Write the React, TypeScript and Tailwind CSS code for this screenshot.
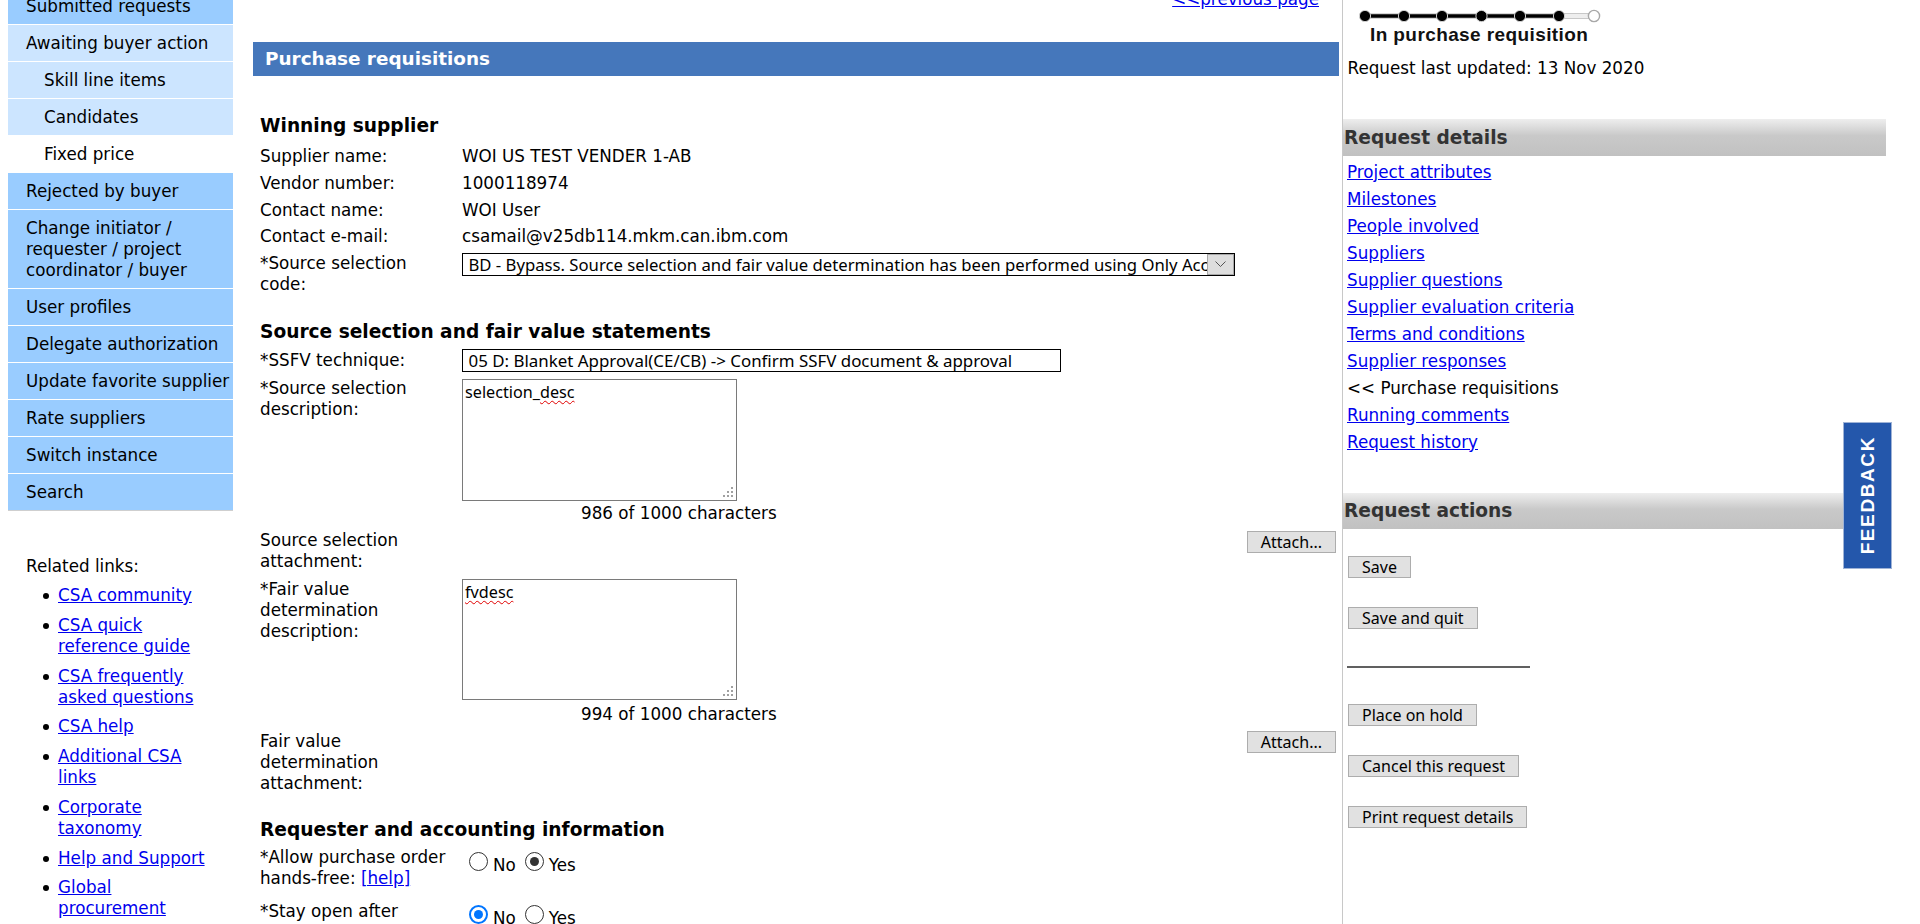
import React from "react";

type Tone = "dark" | "light" | "white";

const toneClass: Record<Tone, string> = {
  dark: "bg-[#99ccff]",
  light: "bg-[#cce5ff]",
  white: "bg-white",
};

const navItems: { lines: string[]; tone: Tone; indent?: boolean; last?: boolean }[] = [
  { lines: ["Submitted requests"], tone: "dark" },
  { lines: ["Awaiting buyer action"], tone: "light" },
  { lines: ["Skill line items"], tone: "light", indent: true },
  { lines: ["Candidates"], tone: "light", indent: true },
  { lines: ["Fixed price"], tone: "white", indent: true },
  { lines: ["Rejected by buyer"], tone: "dark" },
  { lines: ["Change initiator /", "requester / project", "coordinator / buyer"], tone: "dark" },
  { lines: ["User profiles"], tone: "dark" },
  { lines: ["Delegate authorization"], tone: "dark" },
  { lines: ["Update favorite supplier"], tone: "dark" },
  { lines: ["Rate suppliers"], tone: "dark" },
  { lines: ["Switch instance"], tone: "dark" },
  { lines: ["Search"], tone: "dark", last: true },
];

const related: string[][] = [
  ["CSA community"],
  ["CSA quick", "reference guide"],
  ["CSA frequently", "asked questions"],
  ["CSA help"],
  ["Additional CSA", "links"],
  ["Corporate", "taxonomy"],
  ["Help and Support"],
  ["Global", "procurement"],
];

const detailLinks: { text: string; link: boolean }[] = [
  { text: "Project attributes", link: true },
  { text: "Milestones", link: true },
  { text: "People involved", link: true },
  { text: "Suppliers", link: true },
  { text: "Supplier questions", link: true },
  { text: "Supplier evaluation criteria", link: true },
  { text: "Terms and conditions", link: true },
  { text: "Supplier responses", link: true },
  { text: "<< Purchase requisitions", link: false },
  { text: "Running comments", link: true },
  { text: "Request history", link: true },
];

function Lines({ lines }: { lines: string[] }) {
  return (
    <>
      {lines.map((l, i) => (
        <React.Fragment key={i}>
          {i > 0 && <br />}
          {l}
        </React.Fragment>
      ))}
    </>
  );
}

function Grip() {
  return (
    <svg className="absolute right-[3px] bottom-[3px]" width="10" height="10" viewBox="0 0 10 10">
      <rect x="8" y="0" width="2" height="2" fill="#a0a0a0" />
      <rect x="4" y="4" width="2" height="2" fill="#a0a0a0" />
      <rect x="8" y="4" width="2" height="2" fill="#a0a0a0" />
      <rect x="0" y="8" width="2" height="2" fill="#a0a0a0" />
      <rect x="4" y="8" width="2" height="2" fill="#a0a0a0" />
      <rect x="8" y="8" width="2" height="2" fill="#a0a0a0" />
    </svg>
  );
}

function Btn({ children }: { children: React.ReactNode }) {
  return (
    <div className="inline-flex h-[22px] items-center border border-[#adadad] bg-[#e1e1e1] px-[13px] font-['Noto_Sans',sans-serif] text-[16px] leading-[20px] text-black whitespace-nowrap">
      {children}
    </div>
  );
}

function Radio({ checked, blue }: { checked?: boolean; blue?: boolean }) {
  if (checked && blue) {
    return (
      <span className="flex h-[19px] w-[19px] shrink-0 items-center justify-center rounded-full border-2 border-[#0075ff] bg-white">
        <span className="block h-[9px] w-[9px] rounded-full bg-[#0075ff]" />
      </span>
    );
  }
  if (checked) {
    return (
      <span className="flex h-[19px] w-[19px] shrink-0 items-center justify-center rounded-full border border-[#333333] bg-white">
        <span className="block h-[9px] w-[9px] rounded-full bg-[#333333]" />
      </span>
    );
  }
  return <span className="block h-[19px] w-[19px] shrink-0 rounded-full border border-[#333333] bg-white" />;
}

function RadioGroup({ yes, blue }: { yes: boolean; blue?: boolean }) {
  return (
    <div className="ml-[7px] flex items-start">
      <Radio checked={!yes} blue={blue} />
      <span className="ml-[5px] pt-[3px]">No</span>
      <span className="ml-[9px] block">
        <Radio checked={yes} blue={blue} />
      </span>
      <span className="ml-[5px] pt-[3px]">Yes</span>
    </div>
  );
}

export default function App() {
  return (
    <div className="relative h-[924px] w-[1920px] overflow-hidden bg-white font-['DejaVu_Sans',sans-serif] text-[16.75px] leading-[21px] text-black">
      <div className="-mt-[12px] flex items-start">
        {/* Left navigation */}
        <aside className="ml-[8px] w-[225px] shrink-0">
          <nav>
            {navItems.map((it, i) => (
              <div
                key={i}
                className={`${toneClass[it.tone]} ${it.last ? "border-b border-[#cfcfcf]" : "border-b border-white"} ${
                  it.indent ? "pl-[36px]" : "pl-[18px]"
                } pt-[8px] pb-[7px] whitespace-nowrap`}
              >
                <Lines lines={it.lines} />
              </div>
            ))}
          </nav>
          <div className="mt-[45px] pl-[18px]">Related links:</div>
          <ul className="mt-[8px]">
            {related.map((r, i) => (
              <li key={i} className="mb-[8.75px] flex items-start">
                <span className="ml-[35px] mt-[8px] h-[6px] w-[6px] shrink-0 rounded-full bg-black" />
                <a className="ml-[9px] whitespace-nowrap text-[#0000ee] underline">
                  <Lines lines={r} />
                </a>
              </li>
            ))}
          </ul>
        </aside>

        {/* Main content */}
        <main className="ml-[20px] w-[1086px] shrink-0">
          <div className="mt-[1px] pr-[20px] text-right">
            <a className="text-[#0000ee] underline">&lt;&lt;previous page</a>
          </div>
          <div className="mt-[32px] h-[34px] bg-[#4577bb] pl-[12px] text-[18.4px] font-bold leading-[34px] text-white">
            Purchase requisitions
          </div>

          <div className="flex flex-col pl-[7px]">
            <h2 className="mt-[38px] text-[18.6px] font-bold leading-[24px]">Winning supplier</h2>
            <div className="mt-[8.2px] flex flex-col gap-[5.75px]">
              <div className="flex">
                <div className="w-[202px] shrink-0">Supplier name:</div>
                <div>WOI US TEST VENDER 1-AB</div>
              </div>
              <div className="flex">
                <div className="w-[202px] shrink-0">Vendor number:</div>
                <div>1000118974</div>
              </div>
              <div className="flex">
                <div className="w-[202px] shrink-0">Contact name:</div>
                <div>WOI User</div>
              </div>
              <div className="flex">
                <div className="w-[202px] shrink-0">Contact e-mail:</div>
                <div>csamail@v25db114.mkm.can.ibm.com</div>
              </div>
              <div className="flex items-start">
                <div className="w-[202px] shrink-0">
                  *Source selection
                  <br />
                  code:
                </div>
                <div className="flex h-[23px] w-[773px] items-stretch border border-black bg-white font-['Noto_Sans',sans-serif] text-[16.7px] leading-[21px]">
                  <div className="flex-1 overflow-hidden whitespace-nowrap pl-[5.5px]">
                    BD - Bypass. Source selection and fair value determination has been performed using Only Accepted Bid
                  </div>
                  <div className="flex h-[21px] w-[27px] shrink-0 items-start justify-center border border-[#a8a8a8] bg-[#dedede] pt-[6px]">
                    <svg width="11" height="6" viewBox="0 0 11 6">
                      <path d="M0.5 0.5 L5.5 5.5 L10.5 0.5" fill="none" stroke="#555" strokeWidth="1" />
                    </svg>
                  </div>
                </div>
              </div>
            </div>

            <h2 className="mt-[24.8px] text-[18.6px] font-bold leading-[24px]">
              Source selection and fair value statements
            </h2>
            <div className="mt-[4.95px] flex items-start">
              <div className="w-[202px] shrink-0 pt-[1.5px]">*SSFV technique:</div>
              <div className="h-[23px] w-[599px] overflow-hidden whitespace-nowrap border border-black bg-white pl-[5.5px] font-['Noto_Sans',sans-serif] text-[16.9px] leading-[21px]">
                05 D: Blanket Approval(CE/CB) -&gt; Confirm SSFV document &amp; approval
              </div>
            </div>

            <div className="mt-[6.5px] flex items-start">
              <div className="w-[202px] shrink-0">
                *Source selection
                <br />
                description:
              </div>
              <div className="relative mt-[0.5px] h-[122px] w-[275px] border border-[#7a7a7a] bg-white pl-[2px] pt-[2px] font-['Noto_Sans',sans-serif] text-[16.2px] leading-[21px]">
                selection_
                <span className="underline decoration-[#e00000] decoration-wavy decoration-1 underline-offset-2">desc</span>
                <Grip />
              </div>
            </div>
            <div className="mt-[2.5px] pl-[321px]">986 of 1000 characters</div>

            <div className="mt-[6px] flex items-start justify-between">
              <div className="w-[202px] shrink-0">
                Source selection
                <br />
                attachment:
              </div>
              <div className="mr-[3px] mt-[0.5px]">
                <Btn>Attach...</Btn>
              </div>
            </div>

            <div className="mt-[6.5px] flex items-start">
              <div className="w-[202px] shrink-0">
                *Fair value
                <br />
                determination
                <br />
                description:
              </div>
              <div className="relative mt-[0.5px] h-[121px] w-[275px] border border-[#7a7a7a] bg-white pl-[2px] pt-[2px] font-['Noto_Sans',sans-serif] text-[16.2px] leading-[21px]">
                <span className="underline decoration-[#e00000] decoration-wavy decoration-1 underline-offset-2">fvdesc</span>
                <Grip />
              </div>
            </div>
            <div className="mt-[3.5px] pl-[321px]">994 of 1000 characters</div>

            <div className="mt-[6px] flex items-start justify-between">
              <div className="w-[202px] shrink-0">
                Fair value
                <br />
                determination
                <br />
                attachment:
              </div>
              <div className="mr-[3px] mt-[0.5px]">
                <Btn>Attach...</Btn>
              </div>
            </div>

            <h2 className="mt-[23.8px] text-[18.6px] font-bold leading-[24px]">
              Requester and accounting information
            </h2>
            <div className="mt-[5.2px] flex items-start">
              <div className="w-[202px] shrink-0">
                *Allow purchase order
                <br />
                hands-free: <a className="text-[#0000ee] underline">[help]</a>
              </div>
              <div className="mt-[5.5px]">
                <RadioGroup yes={true} />
              </div>
            </div>
            <div className="mt-[12px] flex items-start">
              <div className="w-[202px] shrink-0">
                *Stay open after
                <br />
                award:
              </div>
              <div className="mt-[4.5px]">
                <RadioGroup yes={false} blue />
              </div>
            </div>
          </div>
        </main>

        {/* Right column */}
        <section className="ml-[3px] min-h-[960px] flex-1 border-l border-[#c8c8c8]">
          <svg className="ml-[15px] mt-[18px] block" width="250" height="20" viewBox="0 0 250 20">
            <line x1="201" y1="10" x2="236" y2="10" stroke="#c8c8c8" strokeWidth="6" />
            <line x1="201" y1="10" x2="236" y2="10" stroke="#eeeeee" strokeWidth="4" />
            <line x1="7" y1="10" x2="201" y2="10" stroke="#d6d6d6" strokeWidth="6" />
            <line x1="7" y1="10" x2="201" y2="10" stroke="#000" strokeWidth="3.5" />
            {[7, 46, 84, 123.5, 162, 201].map((cx) => (
              <circle key={cx} cx={cx} cy="10" r="5.6" fill="#000" stroke="#d0d0d0" strokeWidth="1" />
            ))}
            <circle cx="236" cy="10" r="5.6" fill="#fff" stroke="#a8a8a8" strokeWidth="1.4" />
          </svg>
          <div className="-mt-[1px] ml-[27px] font-['Liberation_Sans',sans-serif] text-[19px] font-bold leading-[20px] tracking-[0.4px] text-[#111]">
            In purchase requisition
          </div>
          <div className="ml-[4.5px] mt-[12.5px]">Request last updated: 13 Nov 2020</div>

          <div className="mt-[40.5px] h-[37px] w-[543px] bg-[linear-gradient(#eeeeee,#c9c9c9_45%,#c1c1c1)] pl-[1px] text-[18.6px] font-bold leading-[37px] text-[#333333]">
            Request details
          </div>
          <div className="ml-[4px] mt-[5.5px] flex flex-col gap-[6px]">
            {detailLinks.map((l) =>
              l.link ? (
                <a key={l.text} className="w-fit text-[#0000ee] underline">
                  {l.text}
                </a>
              ) : (
                <span key={l.text}>{l.text}</span>
              )
            )}
          </div>

          <div className="mt-[40.5px] h-[36px] w-[543px] bg-[linear-gradient(#eeeeee,#c9c9c9_45%,#c1c1c1)] pl-[1px] text-[18.6px] font-bold leading-[36px] text-[#333333]">
            Request actions
          </div>

          <div className="ml-[5px] flex flex-col items-start">
            <div className="mt-[27px]">
              <Btn>Save</Btn>
            </div>
            <div className="mt-[29px]">
              <Btn>Save and quit</Btn>
            </div>
          </div>
          <div className="ml-[4px] mt-[37px] h-[2px] w-[183px] bg-[#606060]" />
          <div className="ml-[5px] flex flex-col items-start">
            <div className="mt-[36px]">
              <Btn>Place on hold</Btn>
            </div>
            <div className="mt-[29px]">
              <Btn>Cancel this request</Btn>
            </div>
            <div className="mt-[29px]">
              <Btn>Print request details</Btn>
            </div>
          </div>
        </section>
      </div>

      {/* Feedback tab (fixed overlay) */}
      <div className="absolute left-[1843px] top-[422px] flex h-[147px] w-[49px] items-center justify-center border border-[#9fb3d6] bg-[#2457ab]">
        <span className="rotate-180 font-['Liberation_Sans',sans-serif] text-[19px] font-bold tracking-[1.6px] text-white [writing-mode:vertical-rl]">
          FEEDBACK
        </span>
      </div>
    </div>
  );
}
